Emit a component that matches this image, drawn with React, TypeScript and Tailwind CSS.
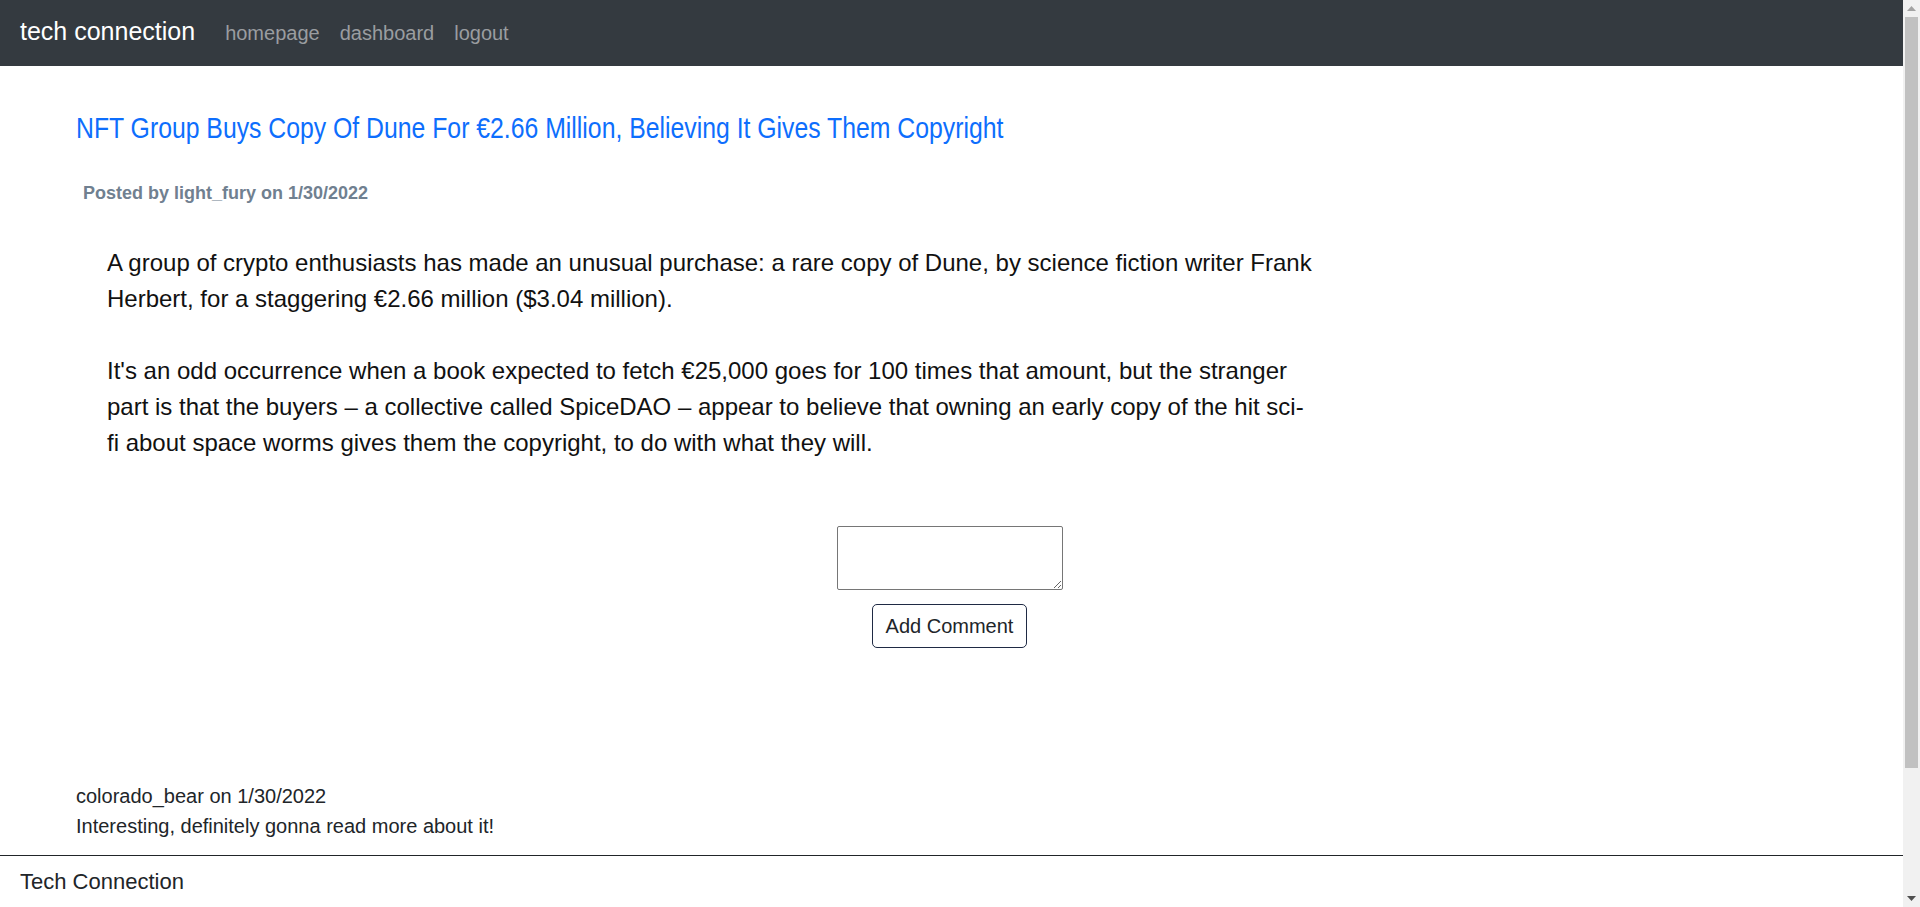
const sans = { fontFamily: '"Liberation Sans", Arial, sans-serif' };

function Navbar() {
  return (
    <nav className="h-[66px] shrink-0 bg-[#343a40] flex items-baseline pt-[19px] px-[20px]">
      <a className="text-[25px] leading-[25px] text-white mr-[20px]">tech connection</a>
      <a className="text-[20px] leading-[20px] text-[#9a9da0] px-[10px]">homepage</a>
      <a className="text-[20px] leading-[20px] text-[#9a9da0] px-[10px]">dashboard</a>
      <a className="text-[20px] leading-[20px] text-[#9a9da0] px-[10px]">logout</a>
    </nav>
  );
}

function Scrollbar() {
  return (
    <div className="w-[17px] shrink-0 h-full bg-[#f1f1f1] flex flex-col items-center">
      <div className="h-[17px] w-full flex items-center justify-center">
        <svg width="9" height="5" viewBox="0 0 9 5">
          <polygon points="0,5 4.5,0 9,5" fill="#a3a3a3" />
        </svg>
      </div>
      <div className="w-[13px] h-[751px] bg-[#c1c1c1]" />
      <div className="flex-1" />
      <div className="h-[17px] w-full flex items-center justify-center">
        <svg width="9" height="5" viewBox="0 0 9 5">
          <polygon points="0,0 4.5,5 9,0" fill="#505050" />
        </svg>
      </div>
    </div>
  );
}

export default function App() {
  return (
    <div className="flex h-[907px] w-[1920px] overflow-hidden bg-white" style={sans}>
      <div className="flex-1 min-w-0 flex flex-col">
        <Navbar />

        <main className="pl-[76px]">
          {/* Post */}
          <section>
            <h2 className="mt-[45px] text-[30px] leading-[34px] text-[#0d6efd] whitespace-nowrap">
              <span className="inline-block origin-left scale-x-[0.826]">
                NFT Group Buys Copy Of Dune For €2.66 Million, Believing It Gives Them Copyright
              </span>
            </h2>
            <p className="mt-[35px] pl-[7px] text-[18px] leading-[27px] font-bold text-[#708090]">
              Posted by light_fury on 1/30/2022
            </p>
            <p className="mt-[38px] ml-[31px] w-[1230px] text-[24px] leading-[36px] text-[#111]">
              A group of crypto enthusiasts has made an unusual purchase: a rare copy of Dune, by science fiction writer Frank
              <br />
              Herbert, for a staggering €2.66 million ($3.04 million).
              <br />
              <br />
              It's an odd occurrence when a book expected to fetch €25,000 goes for 100 times that amount, but the stranger
              <br />
              part is that the buyers – a collective called SpiceDAO – appear to believe that owning an early copy of the hit sci-
              <br />
              fi about space worms gives them the copyright, to do with what they will.
            </p>
          </section>

          {/* Comment form */}
          <form className="mt-[65px] -ml-[80px] flex flex-col items-center">
            <textarea className="w-[226px] h-[64px] border border-[#767676] rounded-[2px] bg-white block" />
            <button
              type="button"
              className="mt-[14px] w-[155px] h-[44px] border border-[#1f2a44] rounded-[5px] text-[20px] text-[#212529] bg-white"
            >
              Add Comment
            </button>
          </form>

          {/* Comments */}
          <div className="mt-[133px] text-[20px] leading-[30px] text-[#212529]">
            <p>colorado_bear on 1/30/2022</p>
            <p>Interesting, definitely gonna read more about it!</p>
          </div>
        </main>

        <footer className="mt-[14px] border-t border-[#212529] pt-[11px] px-[20px] pb-[160px]">
          <p className="text-[22px] leading-[30px] text-[#212529]">Tech Connection</p>
        </footer>
      </div>
      <Scrollbar />
    </div>
  );
}
